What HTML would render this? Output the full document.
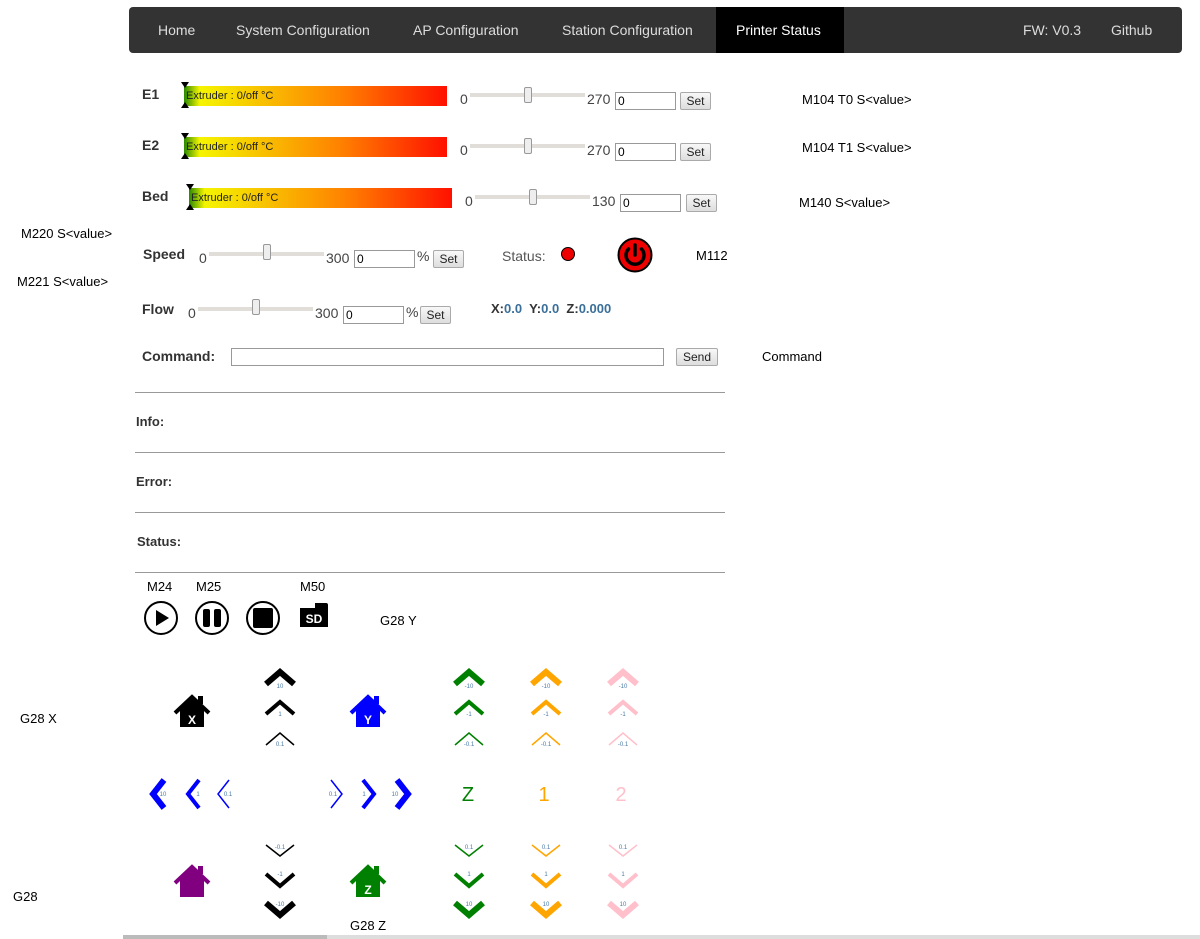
<!DOCTYPE html>
<html><head><meta charset="utf-8"><style>
body{margin:0;width:1200px;height:939px;position:relative;background:#fff;font-family:"Liberation Sans",Arial,sans-serif;overflow:hidden}
.a{position:absolute;white-space:nowrap}
.nav{position:absolute;left:129px;top:7px;width:1053px;height:46px;background:#333;border-radius:4px}
.nav span{position:absolute;top:15px;color:#ddd;font-size:14px}
.lbl{font-weight:bold;font-size:14px;color:#333}
.bar{position:absolute;height:20px;background:linear-gradient(to right,#2a8a00 0%,#f5f500 6%,#f8c000 30%,#ff8000 60%,#ff1000 100%);font-size:11px;color:#222;line-height:20px;padding-left:2px;box-sizing:border-box}
.tri{position:absolute;width:0;height:0;border-left:4px solid transparent;border-right:4px solid transparent}
.sl{position:absolute;height:4px;background:#e1ddd8}
.th{position:absolute;width:8px;height:16px;background:#eee;border:1px solid #999;border-radius:2px;box-sizing:border-box}
.num{position:absolute;font-size:14px;color:#444}
.inp{position:absolute;height:18px;border:1px solid #999;box-sizing:border-box;font-size:12px;padding-left:2px;line-height:16px}
.btn{position:absolute;height:18px;border:1px solid #aaa;border-radius:2px;background:linear-gradient(#f8f8f8,#ddd);box-sizing:border-box;font-size:12px;text-align:center;line-height:16px;color:#222}
.t{position:absolute;font-size:13px;color:#000}
.hr{position:absolute;left:135px;width:590px;height:1px;background:#999}
</style></head><body>
<div class="nav">
<span style="left:29px">Home</span>
<span style="left:107px">System Configuration</span>
<span style="left:284px">AP Configuration</span>
<span style="left:433px">Station Configuration</span>
<div style="position:absolute;left:587px;top:0;width:128px;height:46px;background:#000"></div>
<span style="left:607px;color:#fff">Printer Status</span>
<span style="left:894px">FW: V0.3</span>
<span style="left:982px">Github</span>
</div>

<!-- E1 -->
<div class="a lbl" style="left:142px;top:86px">E1</div>
<div class="bar" style="left:184px;top:86px;width:263px">Extruder : 0/off °C</div>
<div class="tri" style="left:181px;top:82px;border-top:6px solid #000"></div>
<div class="tri" style="left:181px;top:102px;border-bottom:6px solid #000"></div>
<div class="num" style="left:460px;top:91px">0</div>
<div class="sl" style="left:470px;top:93px;width:115px"></div>
<div class="th" style="left:524px;top:87px"></div>
<div class="num" style="left:587px;top:91px">270</div>
<div class="inp" style="left:615px;top:92px;width:61px">0</div>
<div class="btn" style="left:680px;top:92px;width:31px">Set</div>
<div class="t" style="left:802px;top:92px">M104 T0 S&lt;value&gt;</div>

<!-- E2 -->
<div class="a lbl" style="left:142px;top:137px">E2</div>
<div class="bar" style="left:184px;top:137px;width:263px">Extruder : 0/off °C</div>
<div class="tri" style="left:181px;top:133px;border-top:6px solid #000"></div>
<div class="tri" style="left:181px;top:153px;border-bottom:6px solid #000"></div>
<div class="num" style="left:460px;top:142px">0</div>
<div class="sl" style="left:470px;top:144px;width:115px"></div>
<div class="th" style="left:524px;top:138px"></div>
<div class="num" style="left:587px;top:142px">270</div>
<div class="inp" style="left:615px;top:143px;width:61px">0</div>
<div class="btn" style="left:680px;top:143px;width:31px">Set</div>
<div class="t" style="left:802px;top:140px">M104 T1 S&lt;value&gt;</div>

<!-- Bed -->
<div class="a lbl" style="left:142px;top:188px">Bed</div>
<div class="bar" style="left:189px;top:188px;width:263px">Extruder : 0/off °C</div>
<div class="tri" style="left:186px;top:184px;border-top:6px solid #000"></div>
<div class="tri" style="left:186px;top:204px;border-bottom:6px solid #000"></div>
<div class="num" style="left:465px;top:193px">0</div>
<div class="sl" style="left:475px;top:195px;width:115px"></div>
<div class="th" style="left:529px;top:189px"></div>
<div class="num" style="left:592px;top:193px">130</div>
<div class="inp" style="left:620px;top:194px;width:61px">0</div>
<div class="btn" style="left:686px;top:194px;width:31px">Set</div>
<div class="t" style="left:799px;top:195px">M140 S&lt;value&gt;</div>

<div class="t" style="left:21px;top:226px">M220 S&lt;value&gt;</div>
<div class="t" style="left:17px;top:274px">M221 S&lt;value&gt;</div>

<!-- Speed -->
<div class="a lbl" style="left:143px;top:246px">Speed</div>
<div class="num" style="left:199px;top:250px">0</div>
<div class="sl" style="left:209px;top:252px;width:115px"></div>
<div class="th" style="left:263px;top:244px"></div>
<div class="num" style="left:326px;top:250px">300</div>
<div class="inp" style="left:354px;top:250px;width:61px">0</div>
<div class="num" style="left:417px;top:248px">%</div>
<div class="btn" style="left:433px;top:250px;width:31px">Set</div>
<div class="num" style="left:502px;top:248px;color:#555">Status:</div>
<div style="position:absolute;left:561px;top:247px;width:14px;height:14px;border-radius:50%;background:#e00;border:1.5px solid #000;box-sizing:border-box"></div>
<svg style="position:absolute;left:617px;top:237px" width="36" height="36" viewBox="0 0 36 36"><circle cx="18" cy="18" r="16.5" fill="#e00" stroke="#000" stroke-width="2"/><path d="M11.5 12 A9 9 0 1 0 24.5 12" fill="none" stroke="#000" stroke-width="3.5" stroke-linecap="round"/><line x1="18" y1="8" x2="18" y2="18" stroke="#000" stroke-width="3.5" stroke-linecap="round"/></svg>
<div class="t" style="left:696px;top:248px">M112</div>

<!-- Flow -->
<div class="a lbl" style="left:142px;top:301px">Flow</div>
<div class="num" style="left:188px;top:305px">0</div>
<div class="sl" style="left:198px;top:307px;width:115px"></div>
<div class="th" style="left:252px;top:299px"></div>
<div class="num" style="left:315px;top:305px">300</div>
<div class="inp" style="left:343px;top:306px;width:61px">0</div>
<div class="num" style="left:406px;top:304px">%</div>
<div class="btn" style="left:420px;top:306px;width:31px">Set</div>
<div class="a" style="left:491px;top:301px;font-size:13px;font-weight:bold;color:#333">X:<span style="color:#3a6f9a">0.0</span>&nbsp; Y:<span style="color:#3a6f9a">0.0</span>&nbsp; Z:<span style="color:#3a6f9a">0.000</span></div>

<!-- Command -->
<div class="a lbl" style="left:142px;top:348px">Command:</div>
<div class="inp" style="left:231px;top:348px;width:433px"></div>
<div class="btn" style="left:676px;top:348px;width:42px">Send</div>
<div class="t" style="left:762px;top:349px">Command</div>

<div class="hr" style="top:392px"></div>
<div class="a lbl" style="left:136px;top:414px;font-size:13px">Info:</div>
<div class="hr" style="top:452px"></div>
<div class="a lbl" style="left:136px;top:474px;font-size:13px">Error:</div>
<div class="hr" style="top:512px"></div>
<div class="a lbl" style="left:137px;top:534px;font-size:13px">Status:</div>
<div class="hr" style="top:572px"></div>

<div class="t" style="left:147px;top:579px">M24</div>
<div class="t" style="left:196px;top:579px">M25</div>
<div class="t" style="left:300px;top:579px">M50</div>
<svg style="position:absolute;left:143px;top:600px" width="190" height="36">
<circle cx="18" cy="18" r="16" fill="none" stroke="#000" stroke-width="2"/><path d="M13 10 L26 18 L13 26Z"/>
<circle cx="69" cy="18" r="16" fill="none" stroke="#000" stroke-width="2"/><rect x="60" y="9" width="7" height="18" rx="2"/><rect x="71" y="9" width="7" height="18" rx="2"/>
<circle cx="120" cy="18" r="16" fill="none" stroke="#000" stroke-width="2"/><rect x="110" y="8" width="20" height="20" rx="2"/>
<path d="M157 8 H172 V3 H183 Q185 3 185 5 V27 H157Z"/><text x="171" y="23" font-size="12" font-weight="bold" fill="#fff" text-anchor="middle" font-family="Liberation Sans">SD</text>
</svg>
<div class="t" style="left:380px;top:613px">G28 Y</div>
<div class="t" style="left:20px;top:711px">G28 X</div>
<div class="t" style="left:13px;top:889px">G28</div>
<div class="t" style="left:350px;top:918px">G28 Z</div>

<svg style="position:absolute;left:0;top:0" width="1200" height="939" font-family="Liberation Sans">
<g fill="none" stroke-linecap="butt">
<!-- black column -->
<g stroke="#000"><polyline points="266,684 280,672 294,684" stroke-width="6"/><polyline points="266,714 280,702 294,714" stroke-width="4"/><polyline points="266,745 280,733 294,745" stroke-width="1.5"/>
<polyline points="266,845 280,856 294,845" stroke-width="1.5"/><polyline points="266,874 280,886 294,874" stroke-width="4"/><polyline points="266,903 280,915 294,903" stroke-width="6"/></g>
<g stroke="green"><polyline points="455,684 469,672 483,684" stroke-width="6"/><polyline points="455,714 469,702 483,714" stroke-width="4"/><polyline points="455,745 469,733 483,745" stroke-width="1.5"/>
<polyline points="455,845 469,856 483,845" stroke-width="1.5"/><polyline points="455,874 469,886 483,874" stroke-width="4"/><polyline points="455,903 469,915 483,903" stroke-width="6"/></g>
<g stroke="orange"><polyline points="532,684 546,672 560,684" stroke-width="6"/><polyline points="532,714 546,702 560,714" stroke-width="4"/><polyline points="532,745 546,733 560,745" stroke-width="1.5"/>
<polyline points="532,845 546,856 560,845" stroke-width="1.5"/><polyline points="532,874 546,886 560,874" stroke-width="4"/><polyline points="532,903 546,915 560,903" stroke-width="6"/></g>
<g stroke="pink"><polyline points="609,684 623,672 637,684" stroke-width="6"/><polyline points="609,714 623,702 637,714" stroke-width="4"/><polyline points="609,745 623,733 637,745" stroke-width="1.5"/>
<polyline points="609,845 623,856 637,845" stroke-width="1.5"/><polyline points="609,874 623,886 637,874" stroke-width="4"/><polyline points="609,903 623,915 637,903" stroke-width="6"/></g>
<g stroke="blue"><polyline points="164,780 153,794 164,808" stroke-width="6"/><polyline points="199,780 188,794 199,808" stroke-width="4"/><polyline points="229,780 218,794 229,808" stroke-width="1.5"/>
<polyline points="331,780 342,794 331,808" stroke-width="1.5"/><polyline points="363,780 374,794 363,808" stroke-width="4"/><polyline points="397,780 408,794 397,808" stroke-width="6"/></g>
</g>
<g font-size="6" fill="#4a7aa8" text-anchor="middle">
<text x="280" y="688">10</text><text x="280" y="716">1</text><text x="280" y="746">0.1</text><text x="280" y="849">-0.1</text><text x="280" y="876">-1</text><text x="280" y="906">-10</text>
<text x="469" y="688">-10</text><text x="469" y="716">-1</text><text x="469" y="746">-0.1</text><text x="469" y="849">0.1</text><text x="469" y="876">1</text><text x="469" y="906">10</text>
<text x="546" y="688">-10</text><text x="546" y="716">-1</text><text x="546" y="746">-0.1</text><text x="546" y="849">0.1</text><text x="546" y="876">1</text><text x="546" y="906">10</text>
<text x="623" y="688">-10</text><text x="623" y="716">-1</text><text x="623" y="746">-0.1</text><text x="623" y="849">0.1</text><text x="623" y="876">1</text><text x="623" y="906">10</text>
<text x="163" y="796">10</text><text x="198" y="796">1</text><text x="228" y="796">0.1</text><text x="333" y="796">0.1</text><text x="364" y="796">1</text><text x="395" y="796">10</text>
</g>
<text x="468" y="801" font-size="20" fill="green" text-anchor="middle">Z</text>
<text x="544" y="801" font-size="20" fill="orange" text-anchor="middle">1</text>
<text x="621" y="801" font-size="20" fill="pink" text-anchor="middle">2</text>
<!-- houses -->
<g id="h1"><rect x="198" y="696" width="5" height="8" fill="#000"/><polyline points="175,713 192,697 209,713" fill="none" stroke="#000" stroke-width="4"/><path d="M180 710 L192 699 L204 710 V727 H180Z" fill="#000"/><text x="192" y="724" font-size="12" font-weight="bold" fill="#fff" text-anchor="middle">X</text></g>
<rect x="374" y="696" width="5" height="8" fill="blue"/><polyline points="351,713 368,697 385,713" fill="none" stroke="blue" stroke-width="4"/><path d="M356 710 L368 699 L380 710 V727 H356Z" fill="blue"/><text x="368" y="724" font-size="12" font-weight="bold" fill="#fff" text-anchor="middle">Y</text>
<rect x="198" y="866" width="5" height="8" fill="purple"/><polyline points="175,883 192,867 209,883" fill="none" stroke="purple" stroke-width="4"/><path d="M180 880 L192 869 L204 880 V897 H180Z" fill="purple"/>
<rect x="374" y="866" width="5" height="8" fill="green"/><polyline points="351,883 368,867 385,883" fill="none" stroke="green" stroke-width="4"/><path d="M356 880 L368 869 L380 880 V897 H356Z" fill="green"/><text x="368" y="894" font-size="12" font-weight="bold" fill="#fff" text-anchor="middle">Z</text>
</svg>
<div style="position:absolute;left:123px;top:935px;width:1077px;height:4px;background:#ddd"></div>
<div style="position:absolute;left:123px;top:935px;width:204px;height:4px;background:#bbb"></div>
</body></html>
